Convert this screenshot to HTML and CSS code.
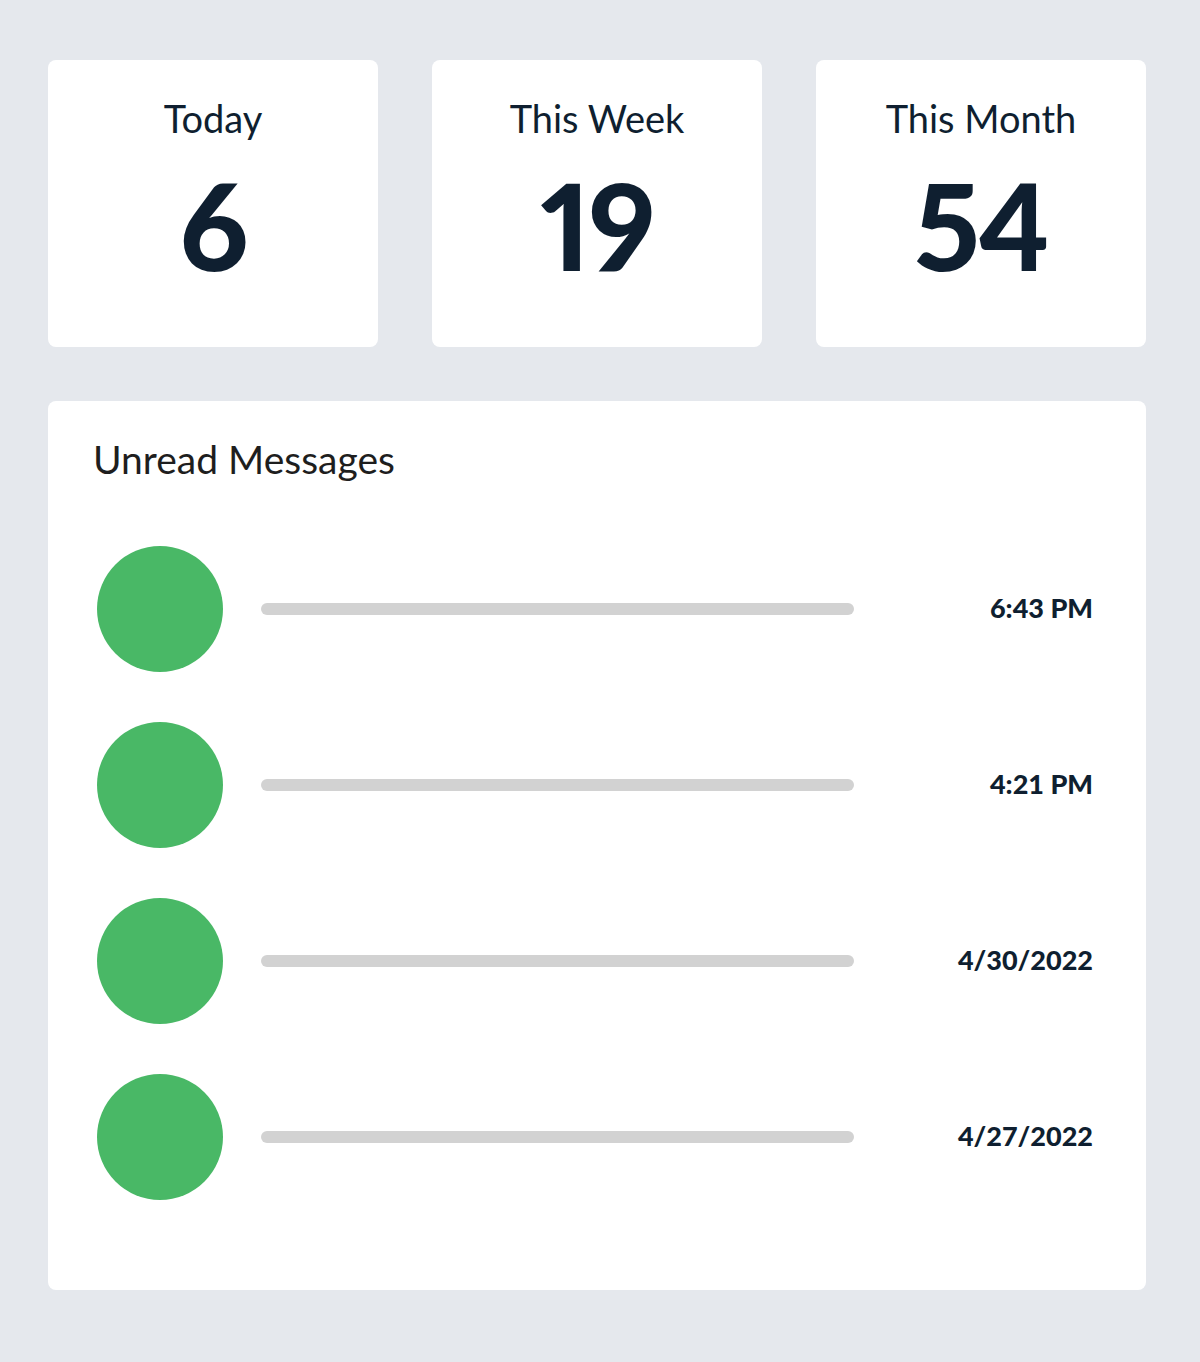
FILE: index.html
```html
<!DOCTYPE html>
<html lang="en">
<head>
<meta charset="utf-8">
<title>Dashboard</title>
<link rel="stylesheet" href="styles.css">
</head>
<body>
<main class="page">
  <section class="stats">
    <div class="stat-card">
      <div class="stat-label">Today</div>
      <div class="stat-value">6</div>
    </div>
    <div class="stat-card">
      <div class="stat-label">This Week</div>
      <div class="stat-value">19</div>
    </div>
    <div class="stat-card">
      <div class="stat-label">This Month</div>
      <div class="stat-value">54</div>
    </div>
  </section>
  <section class="messages">
    <h2 class="messages-title">Unread Messages</h2>
    <ul class="message-list">
      <li class="message-row">
        <span class="avatar"></span>
        <span class="bar"></span>
        <span class="time">6:43 PM</span>
      </li>
      <li class="message-row">
        <span class="avatar"></span>
        <span class="bar"></span>
        <span class="time">4:21 PM</span>
      </li>
      <li class="message-row">
        <span class="avatar"></span>
        <span class="bar"></span>
        <span class="time">4/30/2022</span>
      </li>
      <li class="message-row">
        <span class="avatar"></span>
        <span class="bar"></span>
        <span class="time">4/27/2022</span>
      </li>
    </ul>
  </section>
</main>
</body>
</html>
```

FILE: styles.css
```css
* { box-sizing: border-box; }

html, body {
  margin: 0;
  padding: 0;
  background: #e5e8ed;
}

body {
  font-family: "Lato", "Noto Sans", sans-serif;
  color: #0f1f30;
}

.page {
  width: 1200px;
  padding: 60px 54px 72px 48px;
  display: flex;
  flex-direction: column;
  gap: 54px;
}

.stats {
  display: grid;
  grid-template-columns: repeat(3, 330px);
  column-gap: 54px;
}

.stat-card {
  background: #ffffff;
  border-radius: 8px;
  height: 287px;
  display: flex;
  flex-direction: column;
  align-items: center;
  padding-top: 36px;
}

.stat-label {
  font-size: 38px;
  line-height: 45px;
  font-weight: 400;
  color: #0f1f30;
}

.stat-value {
  font-size: 120px;
  line-height: 120px;
  font-weight: 900;
  margin-top: 24px;
  color: #0f1f30;
  font-variant-numeric: proportional-nums;
  letter-spacing: -2px;
}

.messages {
  background: #ffffff;
  border-radius: 8px;
  height: 889px;
  padding: 35px 53px 0 45px;
}

.messages-title {
  margin: 0;
  font-size: 39px;
  line-height: 46px;
  font-weight: 400;
  color: #1e1e1e;
}

.message-list {
  list-style: none;
  margin: 64px 0 0 4px;
  padding: 0;
  display: flex;
  flex-direction: column;
  gap: 50px;
}

.message-row {
  display: flex;
  align-items: center;
  height: 126px;
}

.avatar {
  width: 126px;
  height: 126px;
  border-radius: 50%;
  background: #49b866;
  flex: none;
}

.bar {
  width: 593px;
  height: 12px;
  border-radius: 6px;
  background: #d2d2d2;
  margin-left: 38px;
  flex: none;
}

.time {
  margin-left: auto;
  font-size: 27px;
  font-weight: 900;
  color: #0f1f30;
  margin-top: -4px;
}
```
